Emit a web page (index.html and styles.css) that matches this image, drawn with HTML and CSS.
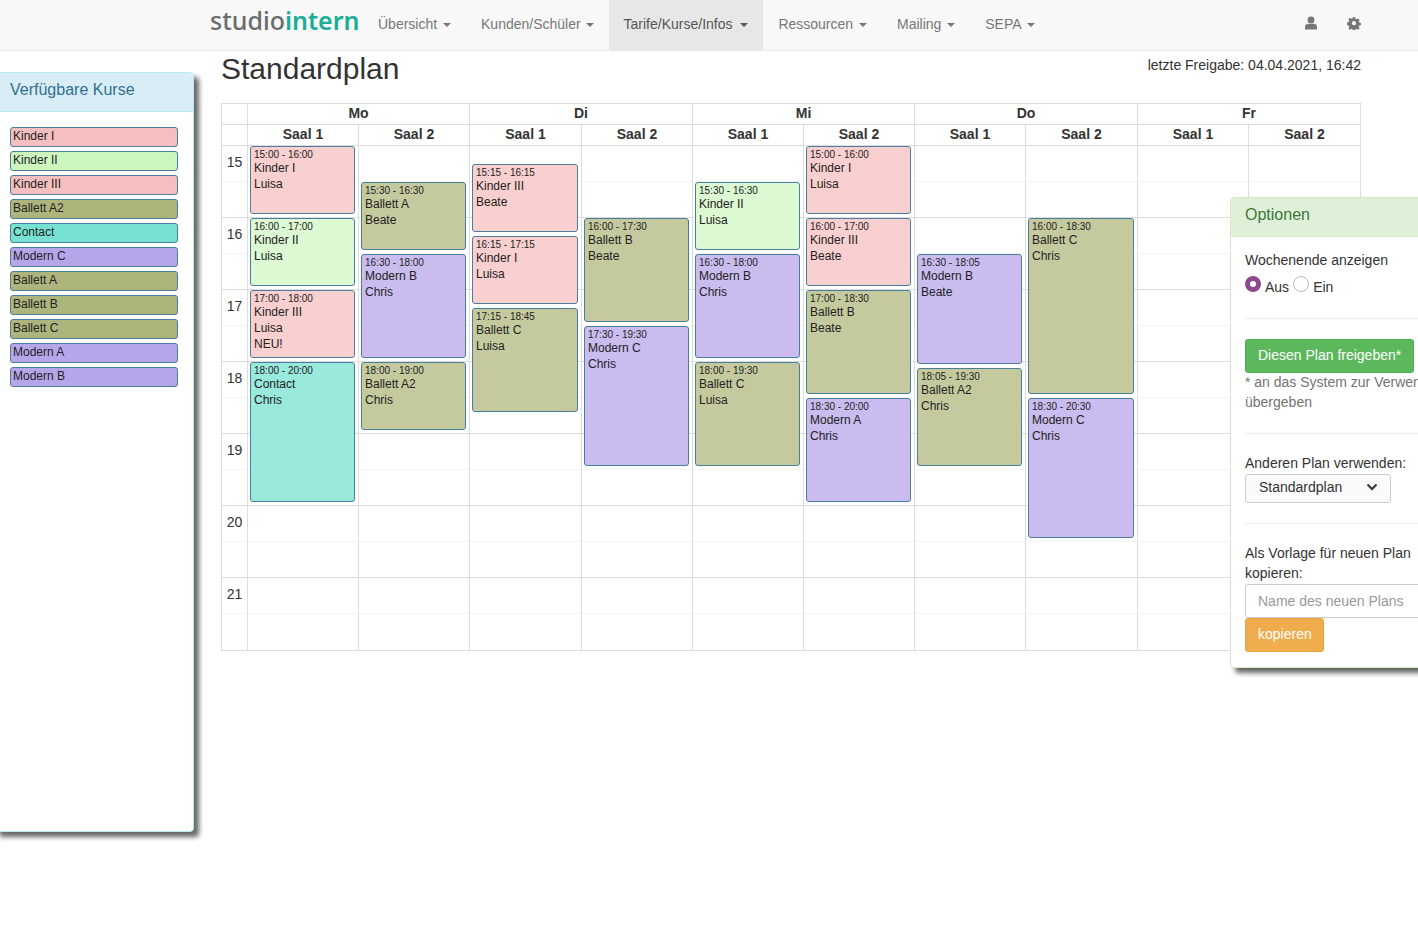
FILE: index.html
```html
<!DOCTYPE html>
<html lang="de">
<head>
    <meta charset="UTF-8">
    <title>Standardplan</title>
    <link rel="stylesheet" href="styles.css">
</head>
<body>
    <nav class="navbar">
        <a class="brand">studio<b>intern</b></a>
        <ul class="nav-list">
            <li>Übersicht <span class="caret"></span></li>
            <li>Kunden/Schüler <span class="caret"></span></li>
            <li class="active">Tarife/Kurse/Infos <span class="caret"></span></li>
            <li>Ressourcen <span class="caret"></span></li>
            <li>Mailing <span class="caret"></span></li>
            <li>SEPA <span class="caret"></span></li>
        </ul>
        <div class="nav-icons">
            <svg viewBox="0 0 14 14" width="14" height="14"><circle cx="7" cy="3.9" r="3.4"/><path d="M1 13.5V10.6C1 8.9 2.5 7.8 4.2 7.8H9.8C11.5 7.8 13 8.9 13 10.6V13.5Z"/></svg>
            <svg viewBox="0 0 14 14" width="14" height="14"><path fill-rule="evenodd" d="M5.7.5h2.6l.4 1.9 1.2.5 1.6-1 1.8 1.8-1 1.6.5 1.2 1.9.4v2.6l-1.9.4-.5 1.2 1 1.6-1.8 1.8-1.6-1-1.2.5-.4 1.9H5.7l-.4-1.9-1.2-.5-1.6 1-1.8-1.8 1-1.6-.5-1.2-1.9-.4V6.2l1.9-.4.5-1.2-1-1.6 1.8-1.8 1.6 1 1.2-.5zM7 4.9a2.3 2.3 0 1 0 0 4.6 2.3 2.3 0 0 0 0-4.6z" transform="translate(.7 .7) scale(.9)"/></svg>
        </div>
    </nav>

    <aside class="panel panel-courses">
        <h3 class="panel-heading">Verfügbare Kurse</h3>
        <div class="course-list">
            <div class="course pink">Kinder I</div>
            <div class="course green">Kinder II</div>
            <div class="course pink">Kinder III</div>
            <div class="course olive">Ballett A2</div>
            <div class="course teal">Contact</div>
            <div class="course purple">Modern C</div>
            <div class="course olive">Ballett A</div>
            <div class="course olive">Ballett B</div>
            <div class="course olive">Ballett C</div>
            <div class="course purple">Modern A</div>
            <div class="course purple">Modern B</div>
        </div>
    </aside>

    <main class="content">
        <div class="title-row">
            <h1>Standardplan</h1>
            <span class="released">letzte Freigabe: 04.04.2021, 16:42</span>
        </div>

        <div class="plan">
            <div class="head blank"></div>
            <div class="head day">Mo</div>
            <div class="head day">Di</div>
            <div class="head day">Mi</div>
            <div class="head day">Do</div>
            <div class="head day">Fr</div>

            <div class="head blank"></div>
            <div class="head">Saal 1</div><div class="head">Saal 2</div>
            <div class="head">Saal 1</div><div class="head">Saal 2</div>
            <div class="head">Saal 1</div><div class="head">Saal 2</div>
            <div class="head">Saal 1</div><div class="head">Saal 2</div>
            <div class="head">Saal 1</div><div class="head">Saal 2</div>

            <div class="hours">
                <div>15</div><div>16</div><div>17</div><div>18</div><div>19</div><div>20</div><div>21</div>
            </div>

            <div class="room">
                <div class="event pink" style="top:0;height:68px"><small>15:00 - 16:00</small>Kinder I<br>Luisa</div>
                <div class="event green" style="top:72px;height:68px"><small>16:00 - 17:00</small>Kinder II<br>Luisa</div>
                <div class="event pink" style="top:144px;height:68px"><small>17:00 - 18:00</small>Kinder III<br>Luisa<br>NEU!</div>
                <div class="event teal" style="top:216px;height:140px"><small>18:00 - 20:00</small>Contact<br>Chris</div>
            </div>
            <div class="room">
                <div class="event olive" style="top:36px;height:68px"><small>15:30 - 16:30</small>Ballett A<br>Beate</div>
                <div class="event purple" style="top:108px;height:104px"><small>16:30 - 18:00</small>Modern B<br>Chris</div>
                <div class="event olive" style="top:216px;height:68px"><small>18:00 - 19:00</small>Ballett A2<br>Chris</div>
            </div>
            <div class="room">
                <div class="event pink" style="top:18px;height:68px"><small>15:15 - 16:15</small>Kinder III<br>Beate</div>
                <div class="event pink" style="top:90px;height:68px"><small>16:15 - 17:15</small>Kinder I<br>Luisa</div>
                <div class="event olive" style="top:162px;height:104px"><small>17:15 - 18:45</small>Ballett C<br>Luisa</div>
            </div>
            <div class="room">
                <div class="event olive" style="top:72px;height:104px"><small>16:00 - 17:30</small>Ballett B<br>Beate</div>
                <div class="event purple" style="top:180px;height:140px"><small>17:30 - 19:30</small>Modern C<br>Chris</div>
            </div>
            <div class="room">
                <div class="event green" style="top:36px;height:68px"><small>15:30 - 16:30</small>Kinder II<br>Luisa</div>
                <div class="event purple" style="top:108px;height:104px"><small>16:30 - 18:00</small>Modern B<br>Chris</div>
                <div class="event olive" style="top:216px;height:104px"><small>18:00 - 19:30</small>Ballett C<br>Luisa</div>
            </div>
            <div class="room">
                <div class="event pink" style="top:0;height:68px"><small>15:00 - 16:00</small>Kinder I<br>Luisa</div>
                <div class="event pink" style="top:72px;height:68px"><small>16:00 - 17:00</small>Kinder III<br>Beate</div>
                <div class="event olive" style="top:144px;height:104px"><small>17:00 - 18:30</small>Ballett B<br>Beate</div>
                <div class="event purple" style="top:252px;height:104px"><small>18:30 - 20:00</small>Modern A<br>Chris</div>
            </div>
            <div class="room">
                <div class="event purple" style="top:108px;height:110px"><small>16:30 - 18:05</small>Modern B<br>Beate</div>
                <div class="event olive" style="top:222px;height:98px"><small>18:05 - 19:30</small>Ballett A2<br>Chris</div>
            </div>
            <div class="room">
                <div class="event olive" style="top:72px;height:176px"><small>16:00 - 18:30</small>Ballett C<br>Chris</div>
                <div class="event purple" style="top:252px;height:140px"><small>18:30 - 20:30</small>Modern C<br>Chris</div>
            </div>
            <div class="room"></div>
            <div class="room"></div>
        </div>
    </main>

    <aside class="panel panel-options">
        <h3 class="panel-heading">Optionen</h3>
        <div class="options-body">
            <section class="option">
                <div>Wochenende anzeigen</div>
                <div class="radios">
                    <span class="radio checked"></span><span>Aus</span>
                    <span class="radio"></span><span>Ein</span>
                </div>
            </section>
            <section class="option">
                <button class="btn btn-green">Diesen Plan freigeben*</button>
                <p class="help">* an das System zur Verwendung übergeben</p>
            </section>
            <section class="option">
                <div>Anderen Plan verwenden:</div>
                <div class="select">Standardplan
                    <svg viewBox="0 0 12 8" width="12" height="8"><path d="M1.5 1.5 6 6 10.5 1.5" fill="none" stroke="#333" stroke-width="2"/></svg>
                </div>
            </section>
            <section class="option">
                <div>Als Vorlage für neuen Plan kopieren:</div>
                <input class="text-input" type="text" placeholder="Name des neuen Plans">
                <button class="btn btn-orange">kopieren</button>
            </section>
        </div>
    </aside>
</body>
</html>
```

FILE: styles.css
```css
* {
    box-sizing: border-box;
}

html, body {
    overflow: hidden;
}

body {
    margin: 0;
    height: 945px;
    position: relative;
    font-family: "Liberation Sans", Arial, sans-serif;
    font-size: 14px;
    line-height: 20px;
    color: #333;
    background-color: #fff;
}

.navbar {
    display: flex;
    height: 51px;
    padding-left: 210px;
    background-color: #f8f8f8;
    border-bottom: 1px solid #e7e7e7;
}

.brand {
    width: 153px;
    font-family: "Noto Sans", sans-serif;
    font-size: 25px;
    font-weight: 500;
    line-height: 41px;
    white-space: nowrap;
    color: #6b6b6e;
}

.brand b {
    font-weight: 600;
    color: #19ae96;
}

.nav-list {
    display: flex;
    margin: 0;
    padding: 0;
    list-style: none;
}

.nav-list li {
    padding: 14px 15px 16px;
    color: #777;
}

.nav-list li.active {
    color: #555;
    background-color: #e7e7e7;
}

.caret {
    display: inline-block;
    margin-left: 2px;
    vertical-align: middle;
    border-top: 4px solid;
    border-right: 4px solid transparent;
    border-left: 4px solid transparent;
}

.nav-list li:nth-child(2) .caret {
    margin-left: 1px;
}

.nav-list li.active .caret {
    margin-left: 4px;
}

.nav-icons {
    display: flex;
    gap: 29px;
    margin-left: auto;
    padding: 16px 57px 0 0;
}

.nav-icons svg {
    fill: #777;
}

.content {
    width: 1140px;
    margin-left: 221px;
}

.title-row {
    display: flex;
    justify-content: space-between;
    height: 52px;
}

h1 {
    margin: 0;
    font-size: 30px;
    font-weight: 400;
    line-height: 35px;
}

.released {
    padding-top: 4px;
}

.plan {
    display: grid;
    grid-template-columns: 26px 111px 111px 112px 111px 111px 111px 111px 112px 111px 1fr;
    border-top: 1px solid #ddd;
    border-left: 1px solid #ddd;
}

.head {
    height: 21px;
    border-right: 1px solid #ddd;
    border-bottom: 1px solid #ddd;
    font-weight: 700;
    line-height: 18px;
    text-align: center;
}

.day {
    grid-column: span 2;
}

.hours div {
    height: 72px;
    padding-top: 6px;
    text-align: center;
    border-right: 1px solid #ddd;
    border-bottom: 1px solid #ddd;
    background: linear-gradient(#fff 35px, #f5f5f5 35px, #f5f5f5 36px, #fff 36px);
}

.hours div:last-child {
    height: 73px;
}

.room {
    position: relative;
    border-right: 1px solid #ddd;
    border-bottom: 1px solid #ddd;
    background:
        linear-gradient(#fff, #fff) 0 100% / 100% 1px no-repeat,
        repeating-linear-gradient(#fff 0, #fff 35px, #f5f5f5 35px, #f5f5f5 36px, #fff 36px, #fff 71px, #ddd 71px, #ddd 72px);
}

.event {
    position: absolute;
    left: 2px;
    right: 3px;
    padding: 1px 3px;
    border: 1px solid #4a7f9c;
    border-radius: 3px;
    font-size: 12px;
    line-height: 16px;
    color: #222;
}

.event small {
    display: block;
    font-size: 10px;
    line-height: 13px;
    margin-bottom: -1px;
}

.event.pink { background-color: #f9cfcf; }
.event.green { background-color: #dcf9d3; }
.event.olive { background-color: #c5ca9e; }
.event.teal { background-color: #99e9dd; }
.event.purple { background-color: #cabcef; }

.panel {
    position: absolute;
    background-color: #fff;
    border: 1px solid transparent;
    border-radius: 4px;
    box-shadow: 5px 5px 5px rgba(0, 0, 0, 0.6);
}

.panel-heading {
    height: 39px;
    margin: 0;
    font-size: 16px;
    font-weight: 400;
    line-height: 34px;
}

/* runs off the left edge of the window */
.panel-courses {
    top: 72px;
    left: -6px;
    width: 200px;
    height: 760px;
    border-color: #bce8f1;
}

.panel-courses .panel-heading {
    padding-left: 15px;
    color: #31708f;
    background-color: #d9edf7;
    border-bottom: 1px solid #bce8f1;
}

.course-list {
    display: flex;
    flex-direction: column;
    gap: 4px;
    padding: 15px 15px 0 15px;
}

.course {
    height: 20px;
    padding-left: 2px;
    border: 1px solid #4a7f9c;
    border-radius: 3px;
    font-size: 12px;
    line-height: 17px;
    color: #222;
}

.course.pink { background-color: #f5bfbf; }
.course.green { background-color: #cdf6bf; }
.course.olive { background-color: #adb57c; }
.course.teal { background-color: #77e2d1; }
.course.purple { background-color: #b7a5ea; }

.panel-options {
    top: 197px;
    left: 1230px;
    width: 240px;
    height: 471px;
    border-color: #d6e9c6;
}

.panel-options .panel-heading {
    padding-left: 14px;
    color: #3c763d;
    background-color: #dff0d8;
    border-bottom: 1px solid #d6e9c6;
}

.options-body {
    padding: 13px 15px 0 14px;
}

.option {
    border-bottom: 1px solid #eee;
}

.option:nth-child(1) {
    height: 69px;
}

.option:nth-child(2) {
    height: 115px;
    padding-top: 20px;
}

.option:nth-child(3) {
    height: 90px;
    padding-top: 19px;
}

.option:nth-child(4) {
    border-bottom: 0;
    padding-top: 19px;
    width: 181px;
}

.radios {
    display: flex;
    align-items: flex-start;
    gap: 4px;
    margin-top: 6px;
}

.radios span:not(.radio) {
    padding-top: 1px;
}

.radio {
    width: 16px;
    height: 16px;
    border: 1px solid #bbb;
    border-radius: 50%;
    background-color: #fff;
}

.radio.checked {
    border: 5px solid #8a4a8c;
}

.btn {
    display: block;
    padding: 5px 12px 7px;
    border: 1px solid transparent;
    border-radius: 3px;
    font: inherit;
    color: #fff;
}

.btn-green {
    width: 169px;
    height: 34px;
    white-space: nowrap;
    background-color: #5cb85c;
    border-color: #4cae4c;
}

.btn-orange {
    width: 79px;
    height: 34px;
    background-color: #f0ad4e;
    border-color: #eea236;
}

.help {
    width: 240px;
    margin: -1px 0 0;
    color: #737373;
}

.select {
    display: flex;
    align-items: center;
    justify-content: space-between;
    width: 146px;
    height: 29px;
    margin-top: 1px;
    padding: 0 12px 3px 13px;
    border: 1px solid #ccc;
    border-radius: 3px;
    background-color: #fafafa;
}

.text-input {
    display: block;
    width: 200px;
    height: 34px;
    margin-top: 1px;
    padding: 6px 12px;
    border: 1px solid #ccc;
    border-radius: 3px 0 0 3px;
    font: inherit;
}

.text-input::placeholder {
    color: #999;
}
```
